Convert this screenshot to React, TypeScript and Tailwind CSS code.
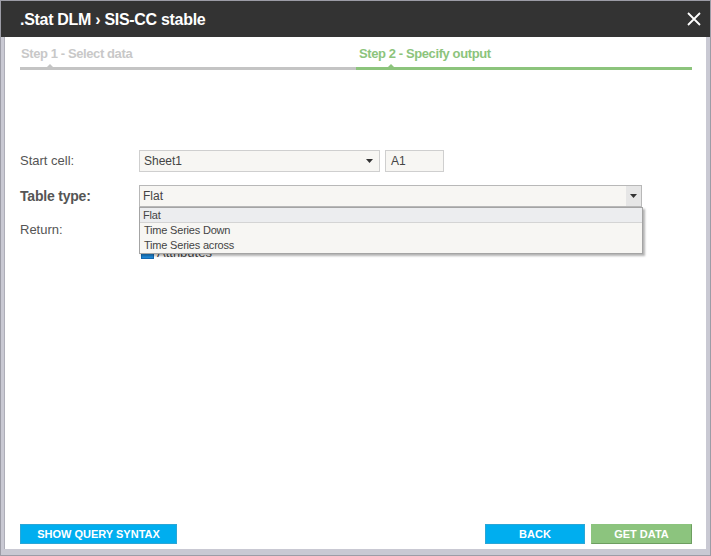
import React from "react";

const Arrow = () => (
  <svg width="7" height="4" viewBox="0 0 7 4"><path d="M0 0h7L3.5 4z" fill="#333" /></svg>
);

export default function App() {
  const font = { fontFamily: '"Liberation Sans", Arial, sans-serif' };
  return (
    <div style={font} className="w-[711px] h-[556px] bg-[#c9c9d3] border border-[#9c9ca6] flex flex-col overflow-hidden">
      {/* Title bar */}
      <div className="h-[36px] bg-[#333333] flex items-center justify-between pl-[19px] pr-[9px] shrink-0">
        <span className="text-white font-bold text-[16px] tracking-[-0.3px] mt-[1px]">.Stat DLM › SIS-CC stable</span>
        <svg width="14" height="14" viewBox="0 0 14 14">
          <path d="M1 1L13 13M13 1L1 13" stroke="#fff" strokeWidth="1.8" />
        </svg>
      </div>
      {/* Body frame */}
      <div className="flex-1 flex pl-[3px] pr-[4px] pb-[6px]">
        <div className="flex-1 bg-white border-l border-[#aeaeb8] flex flex-col pl-[15px] pr-[14px]">
          {/* Steps */}
          <div className="flex pt-[9px]">
            <div className="flex-1 flex flex-col">
              <span className="text-[13px] font-bold text-[#c8c8c8] tracking-[-0.4px] leading-[15px] pl-[1px]">Step 1 - Select data</span>
              <div className="relative mt-[6px] h-[3px] bg-[#c4c4c4]">
                <div className="absolute left-[27px] -top-[3px] w-0 h-0 border-l-[3px] border-r-[3px] border-b-[3px] border-l-transparent border-r-transparent border-b-[#c4c4c4]" />
              </div>
            </div>
            <div className="flex-1 flex flex-col">
              <span className="text-[13px] font-bold text-[#8cc47c] tracking-[-0.4px] leading-[15px] pl-[3px]">Step 2 - Specify output</span>
              <div className="relative mt-[6px] h-[3px] bg-[#8cc47c]">
                <div className="absolute left-[32px] -top-[3px] w-0 h-0 border-l-[3px] border-r-[3px] border-b-[3px] border-l-transparent border-r-transparent border-b-[#8cc47c]" />
              </div>
            </div>
          </div>

          {/* Form */}
          <div className="mt-[80px] flex flex-col">
            <div className="flex items-center h-[22px]">
              <span className="w-[119px] text-[13px] text-[#555]">Start cell:</span>
              <div className="w-[241px] h-[22px] bg-[#f7f6f3] border border-[#cfcfcf] flex items-center justify-between pl-[4px] pr-[6px] text-[12px] text-[#444]">
                <span>Sheet1</span>
                <Arrow />
              </div>
              <div className="ml-[5px] w-[59px] h-[22px] bg-[#f7f6f3] border border-[#cfcfcf] flex items-center pl-[5px] text-[12px] text-[#444]">A1</div>
            </div>

            <div className="flex items-center h-[22px] mt-[13px]">
              <span className="w-[119px] text-[14px] font-bold text-[#555] tracking-[-0.2px]">Table type:</span>
              <div className="relative w-[503px] h-[22px] bg-[#f7f6f3] border border-[#b8b8b8] flex items-center text-[12px] text-[#444]">
                <span className="flex-1 pl-[3px]">Flat</span>
                <div className="w-[15px] h-full bg-[#e6e6e6] flex items-center justify-center"><Arrow /></div>
                {/* Dropdown */}
                <div className="absolute left-[-1px] top-[21px] w-[504px] z-10 bg-[#f7f6f3] border border-[#a4a4a4] shadow-[2px_2px_2px_rgba(0,0,0,0.3)] flex flex-col text-[11px] text-[#444] tracking-[-0.2px]">
                  <div className="h-[15px] bg-[#ecedef] border-b border-[#d4d4d4] flex items-center pl-[3px]">Flat</div>
                  <div className="h-[15px] flex items-center pl-[4px]">Time Series Down</div>
                  <div className="h-[15px] flex items-center pl-[4px]">Time Series across</div>
                </div>
              </div>
            </div>

            <div className="flex mt-[15px]">
              <span className="w-[119px] text-[13px] text-[#555] leading-[15px]">Return:</span>
              <div className="flex flex-col pt-[23px]">
                <div className="flex items-center gap-[3px] h-[15px] ml-[2px]">
                  <div className="w-[13px] h-[13px] bg-[#1e88d8] border border-[#1569b0]" />
                  <span className="text-[13px] text-[#444]">Attributes</span>
                </div>
              </div>
            </div>
          </div>

          <div className="flex-1" />

          {/* Buttons */}
          <div className="flex items-center justify-between pb-[5px]">
            <button className="w-[157px] h-[20px] bg-[#00aeef] border border-[#2ba6d6] text-white text-[11px] font-bold">SHOW QUERY SYNTAX</button>
            <div className="flex gap-[6px]">
              <button className="w-[100px] h-[20px] bg-[#00aeef] border border-[#2ba6d6] text-white text-[11px] font-bold">BACK</button>
              <button className="w-[101px] h-[20px] bg-[#8cc47e] border border-[#8cc47e] border-r-[#6d9e60] border-b-[#6d9e60] text-white text-[11px] font-bold">GET DATA</button>
            </div>
          </div>
        </div>
      </div>
    </div>
  );
}
